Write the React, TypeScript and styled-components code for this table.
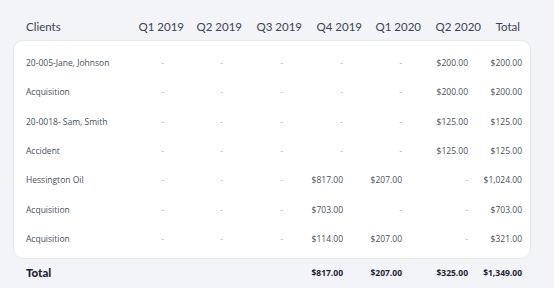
import React from 'react'
import styled, {createGlobalStyle} from 'styled-components'

interface Line {
  client: string
  values: (string | null)[]
  total: string
}

const lines: Line[] = [
  {client: '20-005-Jane, Johnson', values: [null, null, null, null, null, '$200.00'], total: '$200.00'},
  {client: 'Acquisition', values: [null, null, null, null, null, '$200.00'], total: '$200.00'},
  {client: '20-0018- Sam, Smith', values: [null, null, null, null, null, '$125.00'], total: '$125.00'},
  {client: 'Accident', values: [null, null, null, null, null, '$125.00'], total: '$125.00'},
  {client: 'Hessington Oil', values: [null, null, null, '$817.00', '$207.00', null], total: '$1,024.00'},
  {client: 'Acquisition', values: [null, null, null, '$703.00', null, null], total: '$703.00'},
  {client: 'Acquisition', values: [null, null, null, '$114.00', '$207.00', null], total: '$321.00'},
]

const quarters = ['Q1 2019', 'Q2 2019', 'Q3 2019', 'Q4 2019', 'Q1 2020', 'Q2 2020']
const totals = [null, null, null, '$817.00', '$207.00', '$325.00']

const GlobalStyle = createGlobalStyle`
  html, body {
    margin: 0;
    padding: 0;
    background: #f3f4f8;
  }
`

const Page = styled.div`
  width: 554px;
  height: 288px;
  box-sizing: border-box;
  padding: 0 23px 0 13px;
  overflow: hidden;
`

const HeaderRow = styled.div`
  display: grid;
  grid-template-columns: 98.5px 59.5px 58px 60px 60px 59px 60px 39px;
  padding: 20px 0 0 13px;
  height: 40px;
  box-sizing: border-box;
  font-family: Lato, 'Noto Sans', sans-serif;
  font-size: 11.5px;
  line-height: 14px;
  color: #3c4250;
`

const HeadCell = styled.div<{$left?: boolean}>`
  text-align: ${(p) => (p.$left ? 'left' : 'right')};
  white-space: nowrap;
`

const Card = styled.div`
  background: #fff;
  border: 1px solid #e6e8ee;
  border-radius: 10px;
  padding: 7px 0 5px 12px;
`

const Row = styled.div<{$bold?: boolean}>`
  display: grid;
  grid-template-columns: 108px 30px 59px 60px 60px 59px 66px 54px;
  align-items: center;
  height: ${(p) => (p.$bold ? '27px' : '29.33px')};
  font-family: 'Open Sans', 'Noto Sans', sans-serif;
  font-size: 8.5px;
  font-weight: ${(p) => (p.$bold ? 700 : 400)};
  color: ${(p) => (p.$bold ? '#1f2430' : '#4a4f5a')};
  white-space: nowrap;
`

const TotalRow = styled(Row)`
  padding-left: 13px;
`

const Client = styled.div`
  text-align: left;
`

const TotalLabel = styled.div`
  font-family: Lato, 'Noto Sans', sans-serif;
  font-size: 11.5px;
  font-weight: 900;
  color: #1f2430;
`

const Amount = styled.div<{$empty?: boolean}>`
  text-align: right;
  color: ${(p) => (p.$empty ? '#a9adb5' : 'inherit')};
`

const App: React.FC = () => {
  return (
    <Page>
      <GlobalStyle />
      <HeaderRow>
        <HeadCell $left>Clients</HeadCell>
        {quarters.map((q) => (
          <HeadCell key={q}>{q}</HeadCell>
        ))}
        <HeadCell>Total</HeadCell>
      </HeaderRow>
      <Card>
        {lines.map((line, i) => (
          <Row key={i}>
            <Client>{line.client}</Client>
            {line.values.map((v, j) => (
              <Amount key={j} $empty={!v}>{v || '-'}</Amount>
            ))}
            <Amount>{line.total}</Amount>
          </Row>
        ))}
      </Card>
      <TotalRow $bold>
        <TotalLabel>Total</TotalLabel>
        {totals.map((v, j) => (
          <Amount key={j}>{v || ''}</Amount>
        ))}
        <Amount>$1,349.00</Amount>
      </TotalRow>
    </Page>
  )
}

export default App
